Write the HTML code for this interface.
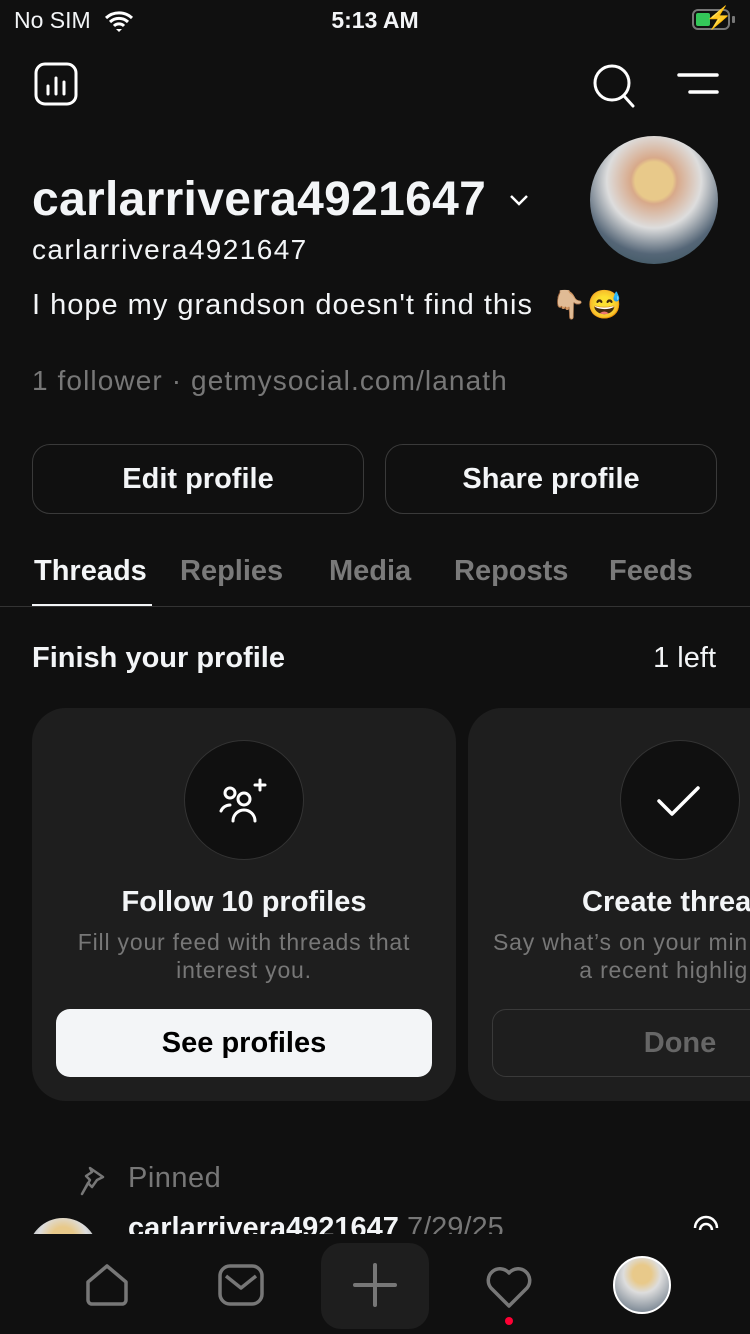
<!DOCTYPE html>
<html><head><meta charset="utf-8">
<style>
*{margin:0;padding:0;box-sizing:border-box}
body{width:750px;height:1334px;background:#101010;color:#f3f5f7;font-family:"Liberation Sans",sans-serif;position:relative;overflow:hidden}
.a{position:absolute}
.btn{position:absolute;top:444px;width:332px;height:70px;border:1.5px solid #3a3a3a;border-radius:18px;font-size:29px;font-weight:bold;display:flex;align-items:center;justify-content:center}
.tab{position:absolute;top:555px;font-size:29px;font-weight:bold;color:#7a7a7a}
.card{position:absolute;top:708px;width:424px;height:393px;background:#1e1e1e;border-radius:34px}
.circ{position:absolute;top:32px;left:152px;width:120px;height:120px;border-radius:50%;background:#101010;border:1.5px solid #333}
.ct{position:absolute;top:178px;width:100%;text-align:center;font-size:29px;font-weight:bold}
.cs{position:absolute;top:220px;width:100%;text-align:center;font-size:23px;letter-spacing:0.8px;color:#777;line-height:28px}
</style></head><body>
<div class="a" style="left:14px;top:7px;font-size:23px">No SIM</div>
<svg class="a" style="left:104px;top:10px" width="30" height="22" viewBox="0 0 30 22"><path d="M2 8a19 19 0 0 1 26 0M6 12a13 13 0 0 1 18 0M10 16a7 7 0 0 1 10 0" stroke="#fff" stroke-width="3" fill="none"/><path d="M12 19l3 3 3-3z" fill="#fff"/></svg>
<div class="a" style="left:0;width:750px;text-align:center;top:7px;font-size:23px;font-weight:bold">5:13 AM</div>
<div class="a" style="left:692px;top:9px;width:38px;height:21px;border:2px solid #777;border-radius:6px"><div style="position:absolute;left:2px;top:2px;width:14px;height:13px;background:#34c759;border-radius:2px"></div></div>
<div class="a" style="left:732px;top:16px;width:3px;height:7px;background:#777;border-radius:1px"></div>
<div class="a" style="left:705px;top:5px;font-size:22px;color:#fff">⚡</div>

<svg class="a" style="left:34px;top:62px" width="44" height="44" viewBox="0 0 44 44"><rect x="2" y="2" width="40" height="40" rx="9" stroke="#fff" stroke-width="3" fill="none"/><path d="M14 24v8M22 16v16M30 20v12" stroke="#fff" stroke-width="3" stroke-linecap="round"/></svg>
<svg class="a" style="left:590px;top:62px" width="50" height="46" viewBox="0 0 50 46"><circle cx="22" cy="21" r="17" stroke="#fff" stroke-width="3" fill="none"/><path d="M34 34l9 10" stroke="#fff" stroke-width="3" stroke-linecap="round"/></svg>
<svg class="a" style="left:676px;top:70px" width="44" height="28"><path d="M3 5h38M14 22h27" stroke="#fff" stroke-width="3.5" stroke-linecap="round"/></svg>

<div class="a" style="left:32px;top:172px;font-size:48px;font-weight:bold;letter-spacing:0.3px">carlarrivera4921647</div>
<svg class="a" style="left:508px;top:192px" width="22" height="16"><path d="M3 4l8 8 8-8" stroke="#fff" stroke-width="2.5" fill="none"/></svg>
<div class="a" style="left:590px;top:136px;width:128px;height:128px;border-radius:50%;background:radial-gradient(circle at 50% 35%,#e8c98a 0 18%,#d8a98a 22%,#ddd 45%,#567 70%,#2a4a50)"></div>
<div class="a" style="left:32px;top:234px;font-size:28px;letter-spacing:1.4px">carlarrivera4921647</div>
<div class="a" style="left:32px;top:288px;font-size:29px;letter-spacing:1px">I hope my grandson doesn't find this &nbsp;<span style="font-size:28px">👇🏼😅</span></div>
<div class="a" style="left:32px;top:365px;font-size:28px;color:#777;letter-spacing:1.1px">1 follower · getmysocial.com/lanath</div>

<div class="btn" style="left:32px">Edit profile</div>
<div class="btn" style="left:385px">Share profile</div>

<div class="tab" style="left:34px;color:#f3f5f7">Threads</div>
<div class="a" style="left:32px;top:604px;width:120px;height:2px;background:#f3f5f7"></div>
<div class="tab" style="left:180px">Replies</div>
<div class="tab" style="left:329px">Media</div>
<div class="tab" style="left:454px">Reposts</div>
<div class="tab" style="left:609px">Feeds</div>
<div class="a" style="left:0;top:606px;width:750px;height:1px;background:#333"></div>

<div class="a" style="left:32px;top:642px;font-size:29px;font-weight:bold">Finish your profile</div>
<div class="a" style="right:34px;top:642px;font-size:29px">1 left</div>

<div class="card" style="left:32px">
 <div class="circ"><svg style="position:absolute;left:30px;top:30px" width="60" height="60" viewBox="0 0 60 60"><circle cx="15" cy="22" r="5" stroke="#fff" stroke-width="3" fill="none"/><path d="M6 40a10 10 0 0 1 9-6" stroke="#fff" stroke-width="3" fill="none" stroke-linecap="round"/><circle cx="29" cy="28" r="6" stroke="#fff" stroke-width="3" fill="none"/><path d="M18 50a11 11 0 0 1 22 0" stroke="#fff" stroke-width="3" fill="none" stroke-linecap="round"/><path d="M40 14h10M45 9v10" stroke="#fff" stroke-width="3" stroke-linecap="round"/></svg></div>
 <div class="ct">Follow 10 profiles</div>
 <div class="cs">Fill your feed with threads that<br>interest you.</div>
 <div style="position:absolute;left:24px;top:301px;width:376px;height:68px;background:#f3f5f7;border-radius:14px;color:#000;font-size:29px;font-weight:bold;display:flex;align-items:center;justify-content:center">See profiles</div>
</div>
<div class="card" style="left:468px">
 <div class="circ"><svg style="position:absolute;left:30px;top:30px" width="60" height="60"><path d="M8 30l13 13 26-26" stroke="#fff" stroke-width="3.5" fill="none" stroke-linecap="round" stroke-linejoin="round"/></svg></div>
 <div class="ct" style="left:114px;text-align:left;width:auto;white-space:nowrap">Create threa</div>
 <div class="cs" style="left:25px;text-align:left;width:auto;white-space:nowrap">Say what’s on your min<br>&nbsp;&nbsp;&nbsp;&nbsp;&nbsp;&nbsp;&nbsp;&nbsp;&nbsp;&nbsp;&nbsp;&nbsp;a recent highlig</div>
 <div style="position:absolute;left:24px;top:301px;width:376px;height:68px;border:1.5px solid #3a3a3a;border-radius:14px;color:#666;font-size:29px;font-weight:bold;display:flex;align-items:center;justify-content:center">Done</div>
</div>

<svg class="a" style="left:78px;top:1164px" width="30" height="32" viewBox="0 0 30 32"><path d="M12 4l13 9-6 3-5 7-4-4-6 11 8-14-4-4 6-4z" stroke="#777" stroke-width="2.5" fill="none" stroke-linejoin="round"/></svg>
<div class="a" style="left:128px;top:1162px;font-size:29px;color:#777;letter-spacing:0.5px">Pinned</div>
<div class="a" style="left:0;top:1210px;width:750px;height:24px;overflow:hidden">
 <div class="a" style="left:28px;top:8px;width:70px;height:70px;border-radius:50%;background:radial-gradient(circle at 50% 30%,#e8c98a 0 20%,#ddd 40%,#567)"></div>
 <div class="a" style="left:128px;top:2px;font-size:29px;font-weight:bold">carlarrivera4921647 <span style="font-weight:normal;color:#777">7/29/25</span></div>
 <svg class="a" style="left:692px;top:4px" width="28" height="28"><path d="M3 14a11 11 0 0 1 22 0M8 16a6 6 0 0 1 12 0" stroke="#fff" stroke-width="2.5" fill="none"/></svg>
</div>

<svg class="a" style="left:84px;top:1262px" width="46" height="46" viewBox="0 0 46 46"><path d="M4 20L23 4l19 16v18a4 4 0 0 1-4 4H8a4 4 0 0 1-4-4z" stroke="#777" stroke-width="3.5" fill="none" stroke-linejoin="round"/></svg>
<svg class="a" style="left:218px;top:1264px" width="46" height="42" viewBox="0 0 46 42"><rect x="2" y="2" width="42" height="38" rx="10" stroke="#777" stroke-width="3.5" fill="none"/><path d="M8 12l15 12 15-12" stroke="#777" stroke-width="3.5" fill="none" stroke-linejoin="round"/></svg>
<div class="a" style="left:321px;top:1243px;width:108px;height:86px;background:#1e1e1e;border-radius:20px"></div>
<svg class="a" style="left:352px;top:1262px" width="46" height="46"><path d="M23 3v40M3 23h40" stroke="#777" stroke-width="4" stroke-linecap="round"/></svg>
<svg class="a" style="left:484px;top:1262px" width="50" height="48" viewBox="0 0 50 48"><path d="M25 44L7 26a11 11 0 0 1 18-15 11 11 0 0 1 18 15z" stroke="#777" stroke-width="3.5" fill="none" stroke-linejoin="round"/></svg>
<div class="a" style="left:505px;top:1317px;width:8px;height:8px;border-radius:50%;background:#ff0034"></div>
<div class="a" style="left:613px;top:1256px;width:58px;height:58px;border-radius:50%;border:2px solid #fff;background:radial-gradient(circle at 50% 30%,#e8c98a 0 20%,#ddd 40%,#567)"></div>
</body></html>
